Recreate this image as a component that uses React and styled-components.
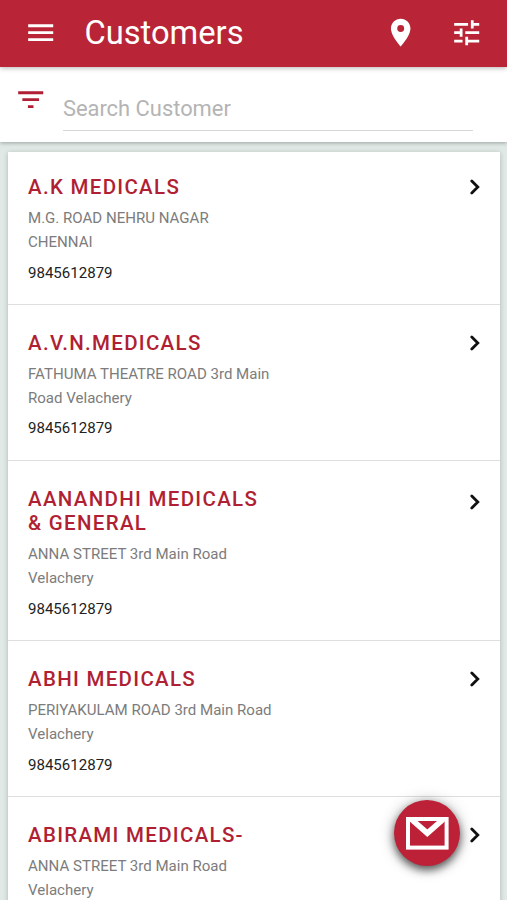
import React from "react";
import styled, { createGlobalStyle } from "styled-components";
import { MdMenu, MdPlace, MdTune, MdFilterList } from "react-icons/md";

const customers = [
    { name: "A.K MEDICALS", address: "M.G. ROAD NEHRU NAGAR CHENNAI", phone: "9845612879" },
    { name: "A.V.N.MEDICALS", address: "FATHUMA THEATRE ROAD 3rd Main Road Velachery", phone: "9845612879" },
    { name: "AANANDHI MEDICALS & GENERAL", address: "ANNA STREET 3rd Main Road Velachery", phone: "9845612879", tall: true },
    { name: "ABHI MEDICALS", address: "PERIYAKULAM ROAD 3rd Main Road Velachery", phone: "9845612879" },
    { name: "ABIRAMI MEDICALS-", address: "ANNA STREET 3rd Main Road Velachery", phone: "9845612879" },
];

const App = () => {

    return (
        <Page>
            <GlobalStyle />
            <AppBar>
                <MdMenu />
                <h1>Customers</h1>
                <MdPlace />
                <MdTune />
            </AppBar>
            <SearchBar>
                <MdFilterList />
                <input type="text" placeholder="Search Customer" />
            </SearchBar>
            <CustomerList>
                {customers.map((customer) => (
                    <CustomerRow key={customer.name}>
                        <CustomerInfo>
                            <h2>{customer.name}</h2>
                            <p className="address">{customer.address}</p>
                            <p className="phone">{customer.phone}</p>
                        </CustomerInfo>
                        <Arrow $tall={customer.tall} viewBox="0 0 10 16">
                            <path d="M1.8 2 7.8 8 1.8 14" />
                        </Arrow>
                    </CustomerRow>
                ))}
            </CustomerList>
            <MailButton aria-label="mail">
                <svg width="43" height="33" viewBox="0 0 43 33">
                    <rect x="2" y="2" width="38.6" height="28.6" strokeWidth="4" />
                    <path d="M5 2 21.3 16.2 37.6 2" strokeWidth="5.6" />
                </svg>
            </MailButton>
        </Page>
    )
}

export default App;

const GlobalStyle = createGlobalStyle`
    body {
        margin: 0;
        background: #E0E9E5;
        font-family: Roboto, sans-serif;
    }
    * {
        box-sizing: border-box;
    }
`

const Page = styled.div`
    display: flex;
    flex-direction: column;
    height: 900px;
    overflow: hidden;
`

const AppBar = styled.header`
    display: flex;
    align-items: center;
    flex: none;
    position: relative;
    z-index: 1;
    height: 67px;
    padding: 0 24px 1px;
    background: #B92437;
    color: #FFFFFF;
    box-shadow: 0 1px 5px rgba(0, 0, 0, 0.3);
    > svg {
        width: 33.4px;
        height: 33.4px;
    }
    > svg + svg {
        margin-left: 32px;
    }
    > h1 {
        flex: 1;
        margin: 0 0 0 27px;
        font-weight: 400;
        font-size: 32.7px;
        line-height: 40px;
    }
`

const SearchBar = styled.div`
    display: flex;
    flex: none;
    align-items: flex-start;
    height: 75px;
    padding: 16px 34px 0 13.5px;
    background: #FFFFFF;
    box-shadow: 0 1px 4px rgba(0, 0, 0, 0.3);
    > svg {
        flex: none;
        width: 33.4px;
        height: 33.4px;
        color: #B01F33;
    }
    > input {
        flex: 1;
        min-width: 0;
        height: 48px;
        margin-left: 16px;
        padding: 4px 0 0;
        border: none;
        border-bottom: 1px solid #D6D6D6;
        outline: none;
        background: none;
        font-family: inherit;
        font-size: 21.9px;
    }
    > input::placeholder {
        color: #B4B4B4;
    }
`

const CustomerList = styled.ul`
    flex: none;
    margin: 10px 7px 0 8px;
    padding: 0;
    list-style: none;
    background: #FFFFFF;
    box-shadow: 0 1px 5px rgba(0, 0, 0, 0.22);
`

const CustomerRow = styled.li`
    display: flex;
    justify-content: space-between;
    padding: 26px 20.5px 18.8px 20px;
    border-bottom: 1px solid #DCDFDE;
    &:first-child {
        padding-top: 23.2px;
    }
`

const CustomerInfo = styled.div`
    width: 246px;
    > h2 {
        margin: 0;
        font-weight: 500;
        font-size: 20.5px;
        line-height: 24.5px;
        letter-spacing: 1.3px;
        color: #B01F33;
    }
    > p {
        margin: 0;
        font-size: 15.05px;
        line-height: 24.5px;
    }
    .address {
        margin-top: 6.2px;
        color: #7C7C7C;
    }
    .phone {
        margin-top: 5.8px;
        color: #222222;
    }
`

const Arrow = styled.svg`
    flex: none;
    width: 10px;
    height: 16px;
    margin-top: ${(props) => (props.$tall ? "7px" : "4.3px")};
    fill: none;
    stroke: #111111;
    stroke-width: 2.8;
    stroke-linecap: round;
`

const MailButton = styled.button`
    display: flex;
    align-items: center;
    justify-content: center;
    position: absolute;
    left: 394px;
    top: 800px;
    width: 66px;
    height: 66px;
    padding: 0;
    border: none;
    border-radius: 50%;
    background: #BC2137;
    box-shadow: 0 4px 9px rgba(0, 0, 0, 0.6), 0 1px 16px rgba(0, 0, 0, 0.25);
    > svg {
        fill: none;
        stroke: #FFFFFF;
    }
`
